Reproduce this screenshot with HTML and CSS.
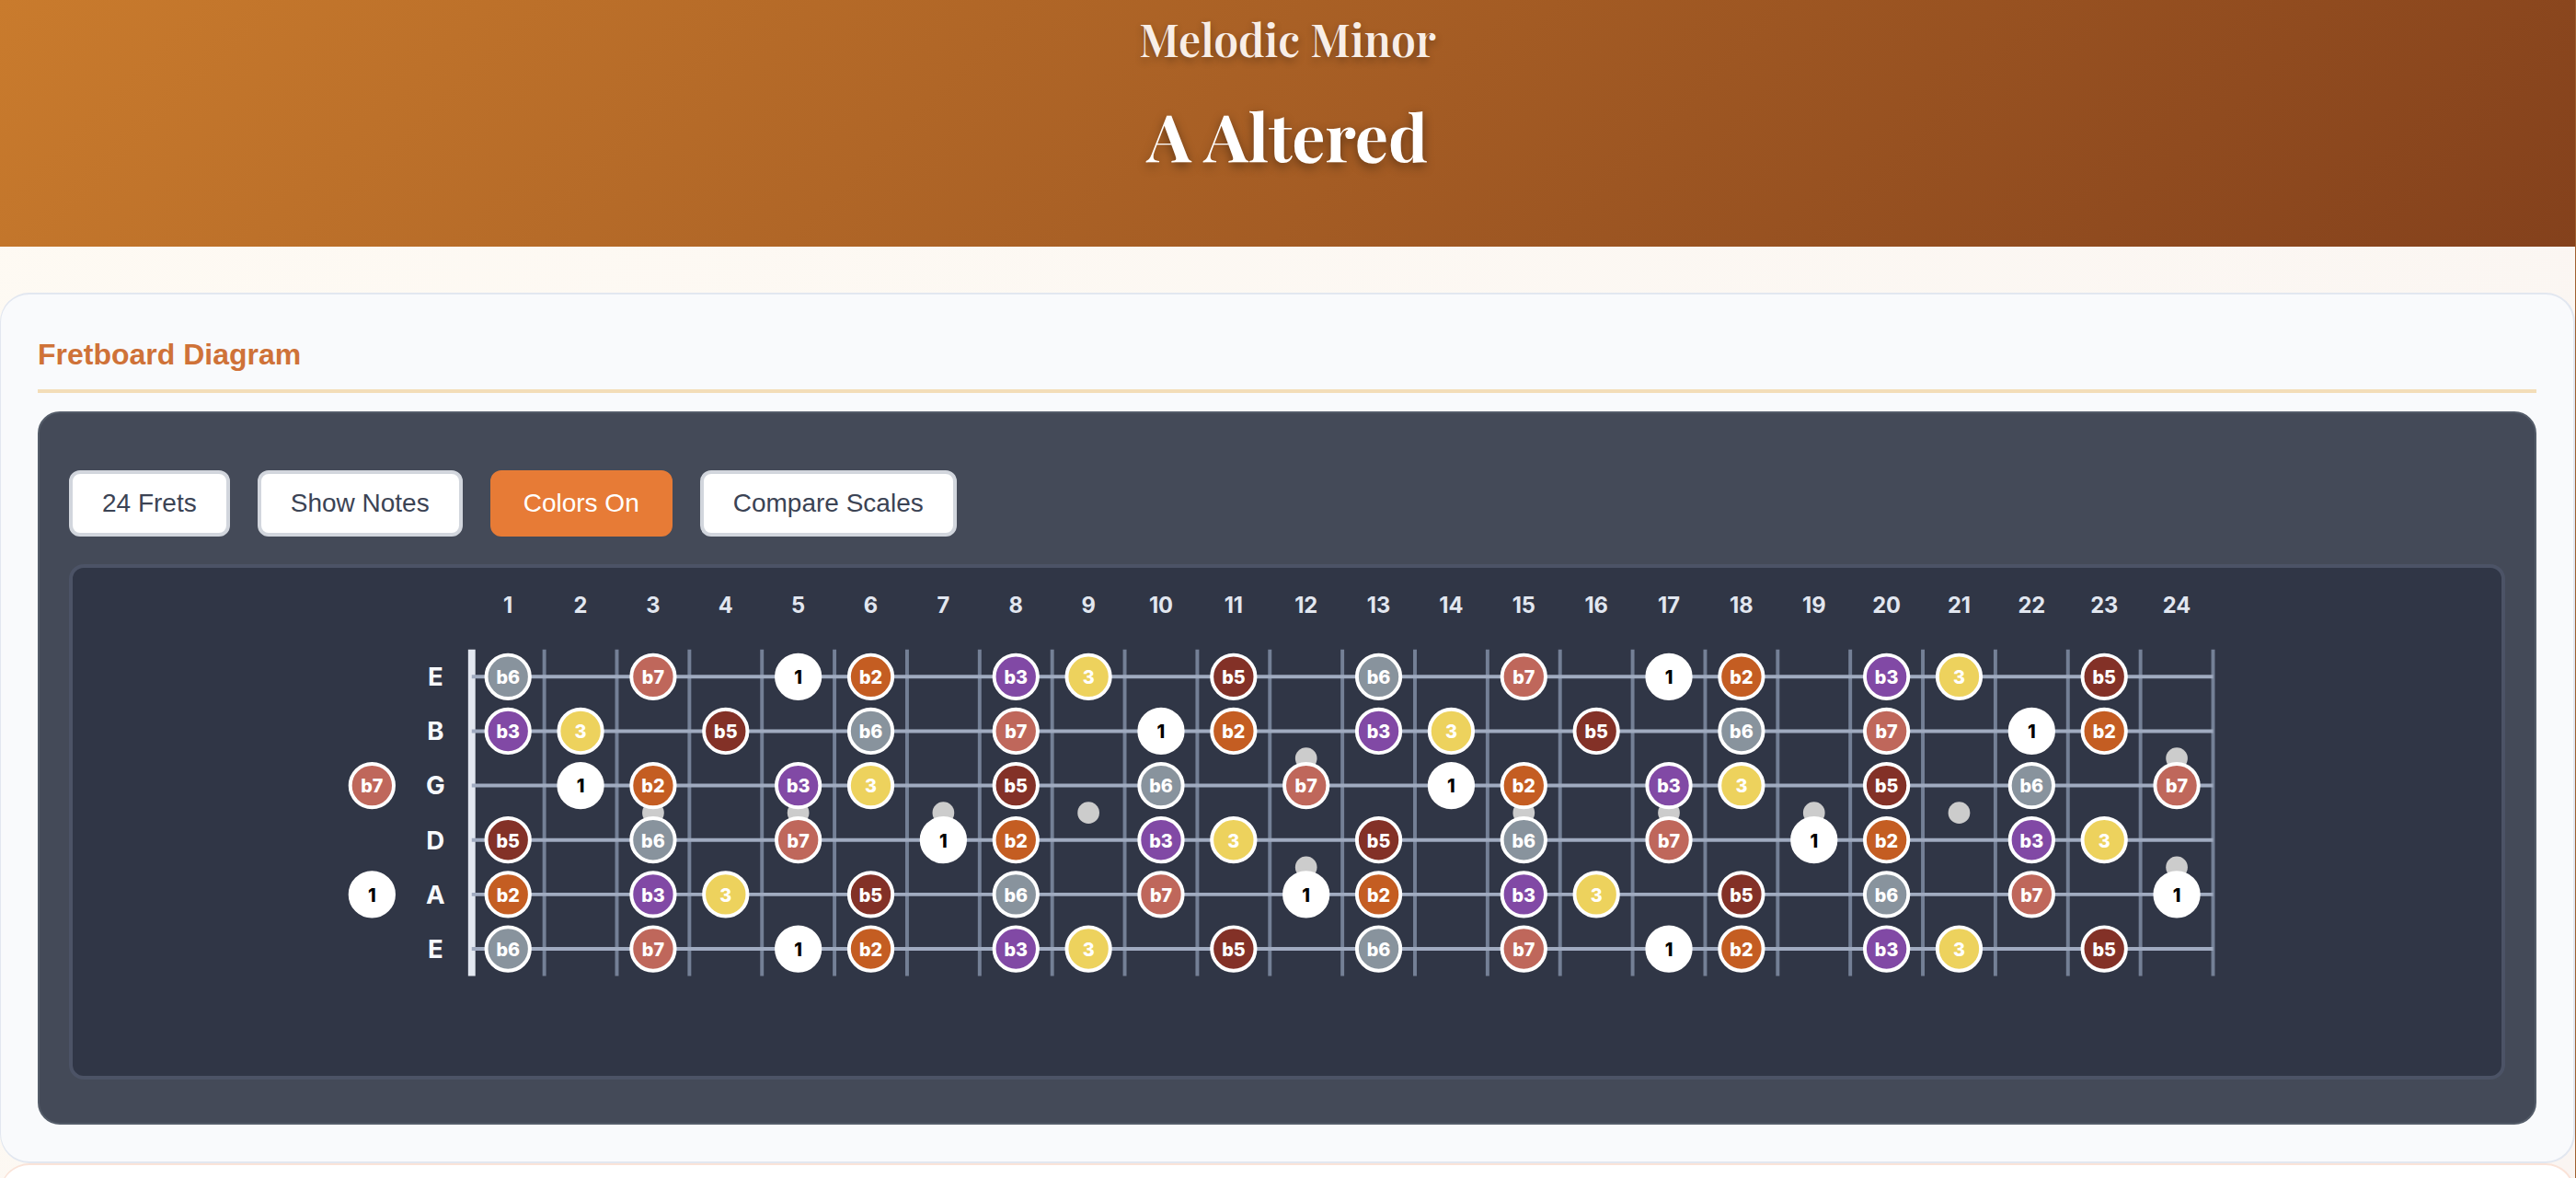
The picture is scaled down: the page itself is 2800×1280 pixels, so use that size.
FILE: index.html
```html
<!DOCTYPE html>
<html lang="en">
<head>
  <meta charset="utf-8">
  <meta name="viewport" content="width=device-width, initial-scale=1">
  <title>A Altered – Melodic Minor</title>
  <link rel="stylesheet" href="styles.css">
</head>
<body>
  <div class="page">
    <header class="hero">
      <p class="hero-family">Melodic Minor</p>
      <h1 class="hero-title">A Altered</h1>
    </header>
    <main class="content">
      <section class="card">
        <h2 class="card-title">Fretboard Diagram</h2>
        <div class="panel">
          <div class="controls">
            <button type="button" class="control">24 Frets</button>
            <button type="button" class="control">Show Notes</button>
            <button type="button" class="control control-active" aria-pressed="true">Colors On</button>
            <button type="button" class="control">Compare Scales</button>
          </div>
          <div class="board">
            <svg class="fretboard" id="fretboard" viewBox="0 0 1339 280" role="img" aria-label="A Altered on a 24 fret guitar neck"></svg>
          </div>
        </div>
      </section>
      <section class="card card-next"></section>
    </main>
  </div>
  <script src="fretboard.js"></script>
</body>
</html>
```
FILE: styles.css
```css
* {
  box-sizing: border-box;
}

body {
  margin: 0;
  background: #fcf8f3;
  font-family: "Liberation Sans", Arial, sans-serif;
}

.page {
  height: 100vh;
  overflow: hidden;
  border-right: 1px solid #a0602f;
  background: linear-gradient(135deg, #fefaf3, #faf5f2);
}

.hero {
  padding: 10px 32px 74px;
  background: linear-gradient(135deg, #c97b2d, #84411c);
  color: #fff;
  font-family: "Playfair Display", "Liberation Serif", serif;
  font-weight: 700;
  text-align: center;
}

.hero-family {
  margin: 0;
  font-size: 48px;
  font-weight: 600;
  line-height: 64px;
  color: #f8eee7;
  text-shadow: 0 4px 8px rgba(0, 0, 0, 0.3);
}

.hero-title {
  margin: 24px 0 0;
  font-size: 72px;
  line-height: 96px;
  text-shadow: 0 4px 12px rgba(0, 0, 0, 0.4);
}

.content {
  padding-top: 50px;
}

.card {
  padding: 40px;
  border: 2px solid #e2e7f0;
  border-left-width: 1px;
  border-radius: 32px;
  background: #f9fafc;
}

.card-next {
  border-color: #fae3d8;
  background: #fff;
}

.card-title {
  margin: 0 0 20px;
  padding-bottom: 12px;
  border-bottom: 4px solid #f3ddb8;
  color: #cf7238;
  font-size: 32px;
  line-height: 51px;
}

.panel {
  padding: 62px 32px 47px;
  border: 2px solid #545c69;
  border-radius: 24px;
  background: #444a58;
}

.controls {
  display: flex;
  flex-wrap: wrap;
  gap: 30px;
  margin-bottom: 30px;
}

.control {
  padding: 16px 32px;
  border: 4px solid #d2d6dd;
  border-radius: 12px;
  background: #fff;
  color: #3b4354;
  font-family: inherit;
  font-size: 28px;
  line-height: 32px;
}

.control-active {
  border-color: #e77b36;
  background: #e77b36;
  color: #fff;
}

.board {
  border: 4px solid #4c5366;
  border-radius: 16px;
  background: #303646;
}

.fretboard {
  display: block;
  width: 100%;
  font-family: Inter, sans-serif;
  font-optical-sizing: none;
  font-weight: 700;
  text-anchor: middle;
}

.fret {
  stroke: #748096;
  stroke-width: 2;
}

.nut {
  stroke: #e2e7f0;
  stroke-width: 4;
}

.string {
  stroke: #a0abc0;
  stroke-width: 2;
}

.inlay {
  fill: #ccc;
}

.fret-number {
  fill: #e2e7f0;
  font-size: 12px;
}

.string-name {
  fill: #f7f9fc;
  font-size: 14px;
}

.note {
  stroke: #fff;
  stroke-width: 2;
}

.note-label {
  fill: #fff;
  font-size: 10px;
  font-weight: 800;
}

.note-1 { fill: #fff; }
.note-b2 { fill: #c45d22; }
.note-b3 { fill: #8149a5; }
.note-3 { fill: #edd25d; }
.note-b5 { fill: #833127; }
.note-b6 { fill: #88939d; }
.note-b7 { fill: #bf675b; }

.note-label-1 {
  fill: #000;
}
```
FILE: fretboard.js
```js
const SVG_NS = "http://www.w3.org/2000/svg";
const board = document.getElementById("fretboard");

const FRETS = 24;
const FRET_WIDTH = 40;
const STRING_GAP = 30;
const NUT_X = 220;
const TOP_Y = 60;

// Semitones above the root A for each open string, high to low.
const STRINGS = [["E", 7], ["B", 2], ["G", 10], ["D", 5], ["A", 0], ["E", 7]];
const DEGREES = { 0: "1", 1: "b2", 3: "b3", 4: "3", 6: "b5", 8: "b6", 10: "b7" };

function add(name, attributes, text) {
  const node = document.createElementNS(SVG_NS, name);
  for (const key in attributes) node.setAttribute(key, attributes[key]);
  if (text) node.textContent = text;
  board.appendChild(node);
}

const fretCenter = (fret) =>
  fret === 0 ? NUT_X - 55 : NUT_X + fret * FRET_WIDTH - FRET_WIDTH / 2;
const stringY = (index) => TOP_Y + index * STRING_GAP;

for (let fret = 0; fret <= FRETS; fret++) {
  const x = NUT_X + fret * FRET_WIDTH;
  add("line", { class: fret ? "fret" : "nut", x1: x, x2: x, y1: TOP_Y - 15, y2: TOP_Y + 165 });
  if (fret) add("text", { class: "fret-number", x: fretCenter(fret), y: 25 }, String(fret));
}

STRINGS.forEach(([name], index) => {
  const y = stringY(index);
  add("line", { class: "string", x1: NUT_X, x2: NUT_X + FRETS * FRET_WIDTH, y1: y, y2: y });
  add("text", { class: "string-name", x: NUT_X - 20, y: y + 5 }, name);
});

[3, 5, 7, 9, 15, 17, 19, 21].forEach((fret) => {
  add("circle", { class: "inlay", cx: fretCenter(fret), cy: 135, r: 6 });
});
[12, 24].forEach((fret) => {
  add("circle", { class: "inlay", cx: fretCenter(fret), cy: 105, r: 6 });
  add("circle", { class: "inlay", cx: fretCenter(fret), cy: 165, r: 6 });
});

STRINGS.forEach(([, open], index) => {
  for (let fret = 0; fret <= FRETS; fret++) {
    const degree = DEGREES[(open + fret) % 12];
    if (!degree) continue;
    const x = fretCenter(fret);
    const y = stringY(index);
    add("circle", { class: `note note-${degree}`, cx: x, cy: y, r: 12 });
    add("text", { class: `note-label note-label-${degree}`, x, y: y + 4 }, degree);
  }
});
```
